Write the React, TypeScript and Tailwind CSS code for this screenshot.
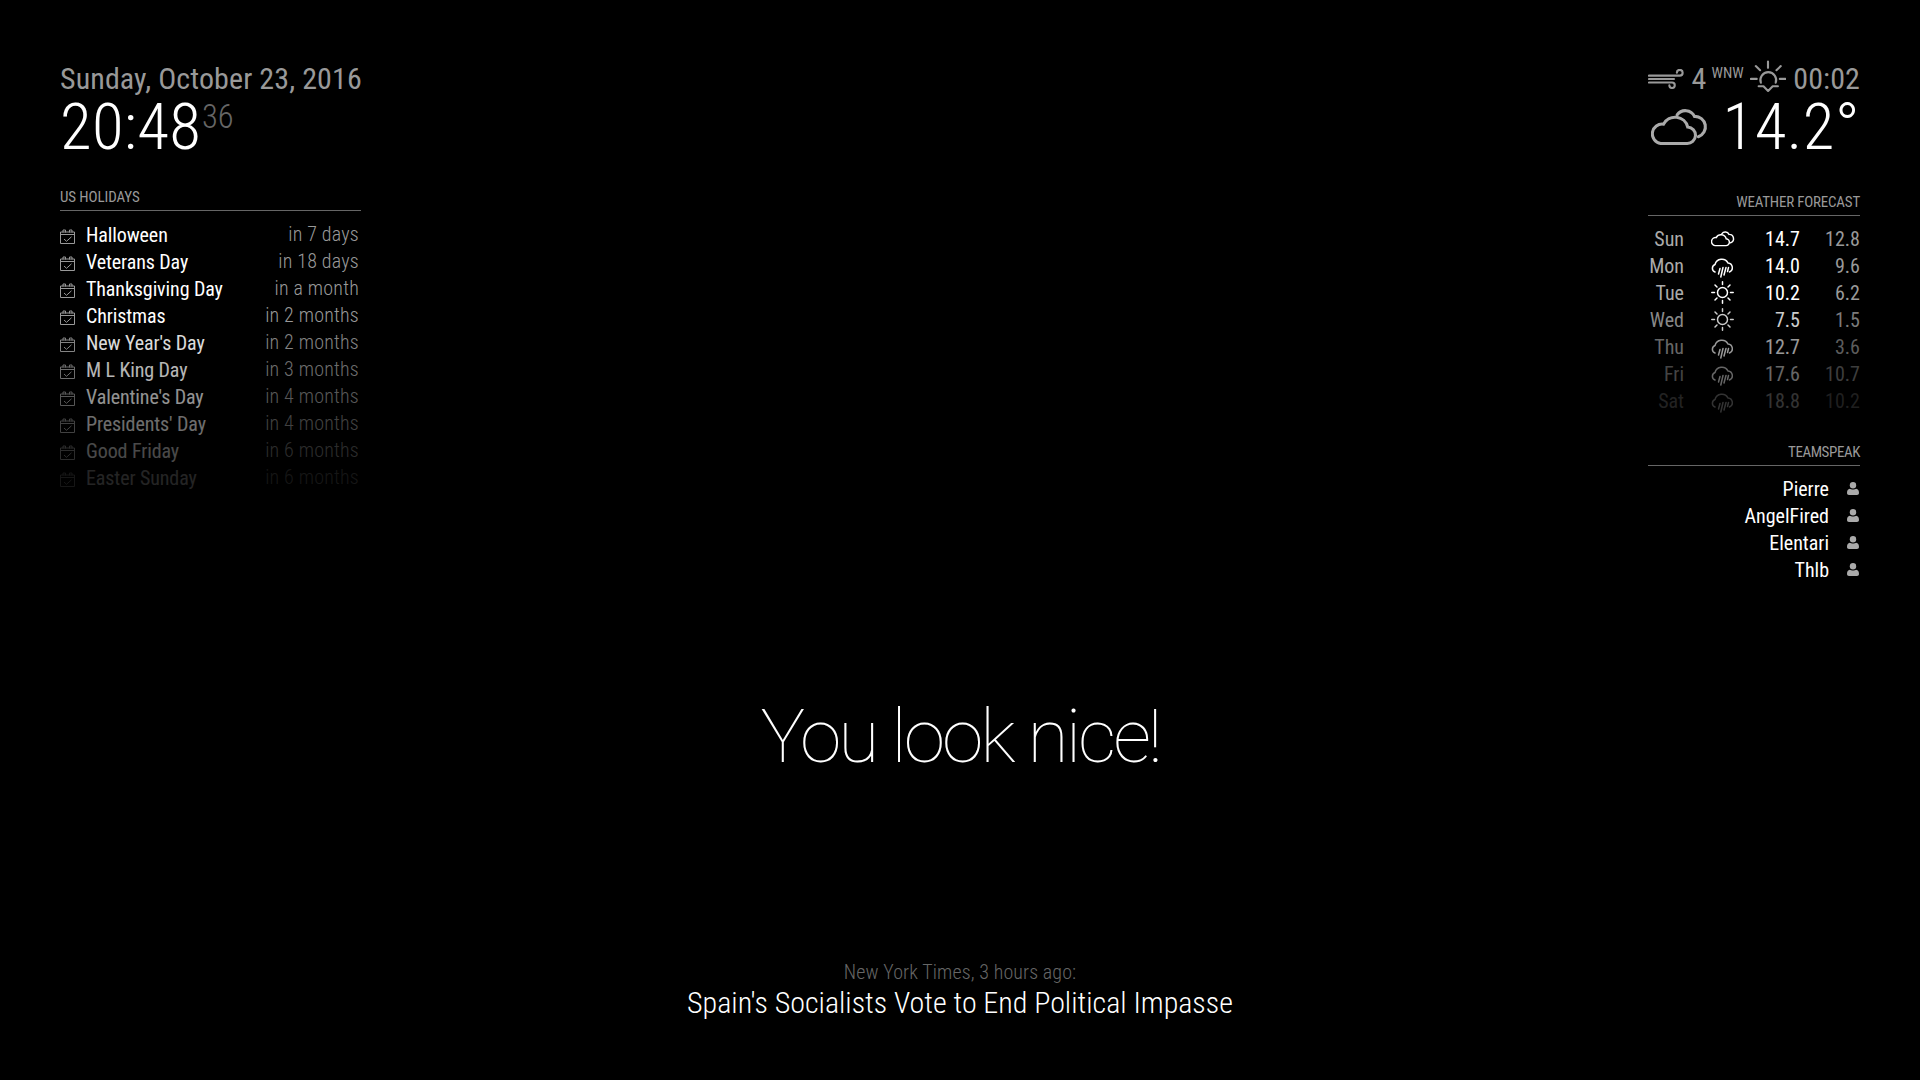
const holidays = [
  { name: "Halloween", when: "in 7 days", opacity: 1 },
  { name: "Veterans Day", when: "in 18 days", opacity: 1 },
  { name: "Thanksgiving Day", when: "in a month", opacity: 1 },
  { name: "Christmas", when: "in 2 months", opacity: 1 },
  { name: "New Year's Day", when: "in 2 months", opacity: 0.857 },
  { name: "M L King Day", when: "in 3 months", opacity: 0.714 },
  { name: "Valentine's Day", when: "in 4 months", opacity: 0.571 },
  { name: "Presidents' Day", when: "in 4 months", opacity: 0.429 },
  { name: "Good Friday", when: "in 6 months", opacity: 0.286 },
  { name: "Easter Sunday", when: "in 6 months", opacity: 0.143 },
];

const forecast = [
  { day: "Sun", icon: "cloudy", max: "14.7", min: "12.8", opacity: 1 },
  { day: "Mon", icon: "rain", max: "14.0", min: "9.6", opacity: 1 },
  { day: "Tue", icon: "sun", max: "10.2", min: "6.2", opacity: 1 },
  { day: "Wed", icon: "sun", max: "7.5", min: "1.5", opacity: 0.8 },
  { day: "Thu", icon: "rain", max: "12.7", min: "3.6", opacity: 0.6 },
  { day: "Fri", icon: "rain", max: "17.6", min: "10.7", opacity: 0.4 },
  { day: "Sat", icon: "rain", max: "18.8", min: "10.2", opacity: 0.2 },
];

const users = ["Pierre", "AngelFired", "Elentari", "Thlb"];

function Cloudy({ className, weight }: { className?: string; weight: number }) {
  return (
    <svg viewBox="-1 -1 60 39" fill="none" stroke="currentColor" strokeWidth={weight} strokeLinecap="round" className={className}>
      <path d="M9 35H36A8.500 8.500 0 0 0 37 18A13.500 13.500 0 0 0 12 15A10 10 0 0 0 9 35Z" />
      <path d="M26 5.500A10.500 10.500 0 0 1 44 7A10.800 10.800 0 0 1 48 28" />
    </svg>
  );
}

function Rain({ className }: { className?: string }) {
  return (
    <svg viewBox="0 0 22 21" fill="none" stroke="currentColor" strokeWidth="1.5" strokeLinecap="round" className={className}>
      <path d="M4 15A4 4 0 0 1 4 7.500A7 7 0 0 1 17 6A4.700 4.700 0 0 1 18.500 15" />
      <path d="M9 11.500L7.500 17M12 10.500L9.800 20M15 10.500L13 18M17.500 10.500L16.500 14.500" />
    </svg>
  );
}

function Sun({ className }: { className?: string }) {
  return (
    <svg viewBox="0 0 23 23" fill="none" stroke="currentColor" strokeWidth="1.5" strokeLinecap="round" className={className}>
      <circle cx="11.5" cy="11.5" r="5" />
      <path d="M11.500 .8v2.700M11.500 19.500v2.700M.8 11.500h2.700M19.500 11.500h2.700M4 4l2 2M17 17l2 2M4 19l2-2M17 6l2-2" />
    </svg>
  );
}

function Wind({ className }: { className?: string }) {
  return (
    <svg viewBox="0 0 37 20" fill="none" stroke="currentColor" strokeWidth="2.2" strokeLinecap="round" className={className}>
      <path d="M1 6.500H33a3 3 0 1 0-3-3" />
      <path d="M1 10H27" />
      <path d="M1 13.700H25a2.800 2.800 0 1 1-2.800 2.800" />
    </svg>
  );
}

function Sunset({ className }: { className?: string }) {
  return (
    <svg viewBox="0 0 38 33" fill="none" stroke="currentColor" strokeWidth="2.2" strokeLinecap="round" strokeLinejoin="round" className={className}>
      <path d="M11.300 23A8.200 8.200 0 1 1 26.700 23" />
      <path d="M18.700 1V7.500M6 5.700L10.500 10M32 5.700L27.500 10M1 19H7M31 19H37" />
      <path d="M9 26.700H14L18.800 31.500L23.600 26.700H29" />
    </svg>
  );
}

function CalendarCheck() {
  return (
    <svg viewBox="0 0 15 15" fill="none" stroke="currentColor" strokeWidth="1" className="w-[15px] h-[15px] mt-[4px] mr-[11px] text-[#999] shrink-0">
      <path d="M.5 3H14.500V14.500H.5ZM.5 5.500H14.500" />
      <path d="M3 3.500V1h2.500V3.500M9.500 3.500V1h2.500V3.500" />
      <path d="M4 10L6.500 12.300L11.500 7.800" />
    </svg>
  );
}

function User() {
  return (
    <svg viewBox="0 0 12 13" fill="currentColor" className="w-[12px] h-[13px] ml-[18px] mr-px text-[#aaa] shrink-0">
      <circle cx="6" cy="3.2" r="3.2" />
      <path d="M2.800 6.700C4 7.700 8 7.700 9.200 6.700C11 6.900 12 8.500 12 11C12 12.300 11.200 13 10 13H2C.8 13 0 12.300 0 11C0 8.500 1 6.900 2.800 6.700Z" />
    </svg>
  );
}

function WeatherIcon({ name }: { name: string }) {
  if (name === "cloudy") return <Cloudy weight={3.6} className="w-[24px] h-[16px]" />;
  if (name === "rain") return <Rain className="w-[22px] h-[21px] mt-[3px]" />;
  return <Sun className="w-[23px] h-[23px]" />;
}

function ModuleHeader({ children, className }: { children: string; className?: string }) {
  return (
    <header className={`text-[15px] leading-[15px] uppercase text-[#999] border-b border-[#666] pb-[5px] ${className ?? "mb-[10px]"}`}>
      {children}
    </header>
  );
}

export default function App() {
  return (
    <div className="h-screen bg-black text-[#aaa] p-[60px] overflow-hidden flex flex-col font-['Roboto_Condensed',Roboto,sans-serif] [font-stretch:75%]">
      <div className="flex justify-between items-start h-[560px]">
        {/* Clock and holidays */}
        <div className="w-[301px]">
          <div className="text-[30px] leading-[37px] tracking-[0.1px] text-[#999] whitespace-nowrap">Sunday, October 23, 2016</div>
          <div className="text-[65px] leading-[61px] font-light text-white tracking-[0.3px]">
            20:48
            <span className="text-[32.5px] leading-none font-light text-[#666] align-[21px] ml-px tracking-normal">36</span>
          </div>
          <div className="mt-[32px]">
            <ModuleHeader className="mb-[10px] tracking-[-0.1px]">US Holidays</ModuleHeader>
            {holidays.map((h) => (
              <div key={h.name} className="flex items-center h-[27px] text-[20px]" style={{ opacity: h.opacity }}>
                <CalendarCheck />
                <span className="text-white flex-1 tracking-[-0.1px]">{h.name}</span>
                <span className="font-light text-[#999] pr-[2px] pb-[2px] tracking-[0.2px]">{h.when}</span>
              </div>
            ))}
          </div>
        </div>

        {/* Weather and teamspeak */}
        <div className="w-[212px]">
          <div className="flex items-center justify-end h-[37px] text-[30px] leading-[37px] text-[#999] tracking-[0.1px]">
            <Wind className="w-[37px] h-[20px]" />
            <span className="ml-[8px]">4</span>
            <span className="text-[15px] leading-[15px] ml-[5px] self-start mt-[6px] tracking-normal">WNW</span>
            <Sunset className="w-[38px] h-[33px] ml-[6px] -mt-[4px]" />
            <span className="ml-[7px]">00:02</span>
          </div>
          <div className="flex items-center justify-between h-[61px] pl-[3px]">
            <Cloudy weight={3.2} className="w-[58px] h-[39px] text-[#aaa]" />
            <span className="text-[65px] leading-[61px] font-light text-white tracking-[0.5px]">14.2°</span>
          </div>
          <div className="mt-[37px]">
            <ModuleHeader className="mb-[10px] text-right tracking-[-0.2px]">Weather Forecast</ModuleHeader>
            <div className="-mt-px">
              {forecast.map((f) => (
                <div key={f.day} className="flex items-center h-[27px] text-[20px]" style={{ opacity: f.opacity }}>
                  <span className="w-[36px] text-right text-[#aaa]">{f.day}</span>
                  <span className="w-[55px] flex pl-[27px] text-white"><WeatherIcon name={f.icon} /></span>
                  <span className="w-[61px] text-right text-white">{f.max}</span>
                  <span className="flex-1 text-right text-[#999]">{f.min}</span>
                </div>
              ))}
            </div>
          </div>
          <div className="mt-[31px]">
            <ModuleHeader className="mb-[9px] text-right tracking-[-0.4px]">TeamSpeak</ModuleHeader>
            {users.map((u) => (
              <div key={u} className="flex items-center justify-end h-[27px] text-[20px] text-white">
                <span>{u}</span>
                <User />
              </div>
            ))}
          </div>
        </div>
      </div>

      {/* Compliment */}
      <div className="mt-[71px] text-center text-[75px] leading-[90px] font-thin text-white tracking-[-3px] font-['Roboto',sans-serif] [font-stretch:100%]">
        You look nice!
      </div>

      {/* News */}
      <div className="mt-[179px] text-center">
        <div className="text-[20px] leading-[25px] font-light text-[#666] tracking-[0.1px]">New York Times, 3 hours ago:</div>
        <div className="text-[30px] leading-[35px] font-light text-white">Spain's Socialists Vote to End Political Impasse</div>
      </div>
    </div>
  );
}
